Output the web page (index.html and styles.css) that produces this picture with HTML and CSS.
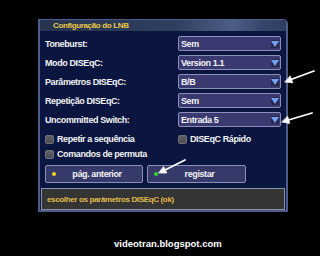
FILE: index.html
```html
<!DOCTYPE html>
<html lang="pt">
<head>
    <meta charset="UTF-8">
    <title>Configuração do LNB</title>
    <link rel="stylesheet" href="styles.css">
</head>
<body>
    <div class="screen">
        <div class="panel">
            <div class="panelTitle">Configuração do LNB</div>
            <div class="panelBody">
                <div class="fields">
                    <span class="label">Toneburst:</span>
                    <div class="select"><span>Sem</span><span class="drop"></span></div>
                    <span class="label">Modo DISEqC:</span>
                    <div class="select"><span>Version 1.1</span><span class="drop"></span></div>
                    <span class="label">Parâmetros DISEqC:</span>
                    <div class="select"><span>B/B</span><span class="drop"></span></div>
                    <span class="label">Repetição DISEqC:</span>
                    <div class="select"><span>Sem</span><span class="drop"></span></div>
                    <span class="label">Uncommitted Switch:</span>
                    <div class="select"><span>Entrada 5</span><span class="drop"></span></div>
                </div>
                <div class="checks">
                    <div class="check"><span class="box"></span>Repetir a sequência</div>
                    <div class="check"><span class="box"></span>DISEqC Rápido</div>
                    <div class="check"><span class="box"></span>Comandos de permuta</div>
                </div>
                <div class="buttons">
                    <div class="btn"><span class="dot yellow"></span><span class="btnText">pág. anterior</span></div>
                    <div class="btn"><span class="dot green"></span><span class="btnText">registar</span></div>
                </div>
            </div>
            <div class="help">escolher os parâmetros DISEqC (ok)</div>
        </div>
        <div class="credit">videotran.blogspot.com</div>

        <!-- setas desenhadas por cima da captura -->
        <svg class="arrows" width="320" height="256" viewBox="0 0 320 256">
            <g stroke="#fff" stroke-width="1.8" stroke-linecap="round" fill="#fff">
                <line x1="314" y1="71" x2="291" y2="79.5"/>
                <polygon points="285,82 292.8,82.8 290.3,76.2" stroke-width="0.8"/>
                <line x1="312" y1="113" x2="288.5" y2="120"/>
                <polygon points="282,122 289.7,123.4 287.7,116.6" stroke-width="0.8"/>
                <line x1="185" y1="160" x2="165" y2="170"/>
                <polygon points="159,173 166.9,173 163.7,166.8" stroke-width="0.8"/>
            </g>
        </svg>
    </div>
</body>
</html>
```

FILE: styles.css
```css
* {
    padding: 0;
    margin: 0;
    box-sizing: border-box;
}

body {
    background-color: #000;
    font-family: "Liberation Sans", Arial, sans-serif;
}

div.screen {
    position: relative;
    width: 320px;
    height: 256px;
    padding: 19px 0 0 38px;
}

div.panel {
    width: 250px;
    height: 193px;
    display: flex;
    flex-direction: column;
    background-color: #0a1640;
    border: 2px solid #4d5c8a;
    border-top-width: 1px;
    border-radius: 0 5px 0 0;
}

div.panelTitle {
    height: 11px;
    padding-left: 13px;
    font-size: 8px;
    font-weight: bold;
    letter-spacing: -0.35px;
    line-height: 11px;
    color: #eac846;
    background: linear-gradient(100deg, #27344f 0%, #303f60 55%, #4d5e85 78%, #36466b 90%, #2e3c5e 100%);
    border-radius: 0 4px 0 0;
}

div.panelBody {
    flex: 1;
    padding: 5px 5px 0 5px;
}

div.fields {
    display: grid;
    grid-template-columns: 1fr 103px;
    row-gap: 4px;
    align-items: center;
}

span.label,
div.check,
div.select,
div.btn {
    font-size: 9px;
    font-weight: bold;
    letter-spacing: -0.4px;
    color: #f2f2f2;
}

div.select {
    height: 15px;
    display: flex;
    align-items: center;
    justify-content: space-between;
    padding: 0 1px 0 2px;
    background-color: #3a3a70;
    border: 1px solid #8f8fbc;
    border-radius: 2px;
}

span.drop {
    width: 8px;
    height: 8px;
    background-color: #28284c;
    position: relative;
}

span.drop::after {
    content: '';
    position: absolute;
    left: 0;
    top: 1px;
    border-left: 4px solid transparent;
    border-right: 4px solid transparent;
    border-top: 6px solid #72a2f6;
}

div.checks {
    display: grid;
    grid-template-columns: 133px 1fr;
    row-gap: 3px;
    margin-top: 6px;
}

div.check {
    height: 12px;
    display: flex;
    align-items: center;
    gap: 3px;
}

span.box {
    width: 9px;
    height: 9px;
    background: linear-gradient(#606068, #4a4a52);
    border: 1px solid #707078;
    border-radius: 2px;
}

div.buttons {
    display: flex;
    gap: 4px;
    margin-top: 5px;
}

div.btn {
    width: 98px;
    height: 18px;
    display: flex;
    align-items: center;
    padding: 0 4px 0 6px;
    background-color: #363a6a;
    border: 1px solid #8a90b8;
    border-radius: 2px;
}

div.btn + div.btn {
    width: 99px;
}

span.dot {
    width: 4px;
    height: 4px;
    border-radius: 50%;
}

span.dot.yellow {
    background-color: #f0d020;
}

span.dot.green {
    background-color: #30d830;
}

span.btnText {
    flex: 1;
    text-align: center;
}

div.help {
    height: 22px;
    margin: 0 1px 0 1px;
    padding-left: 5px;
    display: flex;
    align-items: center;
    font-size: 8px;
    font-weight: bold;
    letter-spacing: -0.35px;
    color: #e0ba4a;
    background-color: #343434;
    border: 1px solid #8a8fa6;
}

div.credit {
    margin: 26px 0 0 76px;
    font-size: 9.5px;
    font-weight: bold;
    color: #fff;
}

svg.arrows {
    position: absolute;
    left: 0;
    top: 0;
    pointer-events: none;
}
```
